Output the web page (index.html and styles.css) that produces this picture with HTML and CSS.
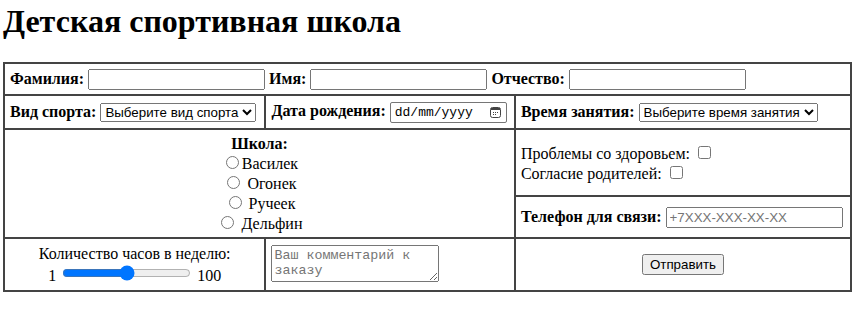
FILE: index.html
```
<!DOCTYPE html>
<html lang="ru">
<head>
    <meta charset="utf-8">
    <title>Детская спортивная школа</title>
    <link rel="stylesheet" href="styles.css">
</head>
<body>
    <h1>Детская спортивная школа</h1>
    <form>
        <table class="anketa">
            <colgroup>
                <col class="c1">
                <col class="c2">
                <col class="c3">
            </colgroup>
            <tr class="r1">
                <td colspan="3"><b>Фамилия:</b> <input type="text" name="fam"> <b>Имя:</b> <input type="text" name="name"> <b>Отчество:</b> <input type="text" name="otch"></td>
            </tr>
            <tr class="r2">
                <td><b>Вид спорта:</b> <select name="sport"><option>Выберите вид спорта</option><option>Футбол</option><option>Плавание</option></select></td>
                <td><b>Дата рождения:</b> <span class="date"><input type="text" name="birth" placeholder="dd/mm/yyyy"><svg width="11" height="11" viewBox="0 0 11 11"><rect x="0.5" y="0.5" width="10" height="10" rx="2" fill="none" stroke="#444"/><rect x="1" y="1" width="9" height="2" fill="#444"/><rect x="3" y="5" width="1" height="1" fill="#444"/><rect x="5" y="5" width="1" height="1" fill="#444"/><rect x="7" y="5" width="1" height="1" fill="#444"/><rect x="3" y="7" width="1" height="1" fill="#444"/><rect x="5" y="7" width="1" height="1" fill="#444"/></svg></span></td>
                <td><b>Время занятия:</b> <select name="time"><option>Выберите время занятия</option><option>Утро</option><option>Вечер</option></select></td>
            </tr>
            <tr class="r3">
                <td colspan="2" rowspan="2" class="center">
                    <b>Школа:</b><br>
                    <label><input type="radio" name="school">Василек</label><br>
                    <label><input type="radio" name="school"> Огонек</label><br>
                    <label><input type="radio" name="school"> Ручеек</label><br>
                    <label><input type="radio" name="school"> Дельфин</label>
                </td>
                <td class="checks">
                    Проблемы со здоровьем: <input type="checkbox" name="health"><br>
                    Согласие родителей: <input type="checkbox" name="agree">
                </td>
            </tr>
            <tr class="r4">
                <td><b>Телефон для связи:</b> <input type="tel" name="phone" placeholder="+7XXX-XXX-XX-XX"></td>
            </tr>
            <tr class="r5">
                <td class="center">Количество часов в неделю:<br>1 <input type="range" name="hours" min="1" max="100"> 100</td>
                <td><textarea name="comment" placeholder="Ваш комментарий к заказу"></textarea></td>
                <td class="center"><button type="submit">Отправить</button></td>
            </tr>
        </table>
    </form>
</body>
</html>
```

FILE: styles.css
```
body { margin: 3px; font-family: "Liberation Serif", "Times New Roman", serif; font-size: 16px; color: #000; background: #fff; }
h1 { margin: 0 0 22px; font-size: 32px; }
input, select, button { font-family: "Liberation Sans", Arial, sans-serif; font-size: 13.33px; }
textarea { font-family: "Liberation Mono", "Courier New", monospace; font-size: 13.33px; }
input[type="text"], input[type="tel"] { box-sizing: border-box; width: 177px; height: 21px; }
.anketa { border-collapse: collapse; width: 849px; border: 2px solid #444; }
.anketa td { border: 2px solid #444; padding: 4px 5px; }
.c1 { width: 262px; }
.c2 { width: 250px; }
.c3 { width: 337px; }
.r1 { height: 32px; }
.r2 { height: 34px; }
.r3 { height: 67px; }
.r4 { height: 42px; }
.r5 { height: 53px; }
.center { text-align: center; }
.checks { padding-top: 8px; }
.date { display: inline-flex; align-items: center; box-sizing: border-box; width: 117px; height: 21px; border: 1px solid #767676; border-radius: 2px; padding: 0 5px 0 4px; vertical-align: middle; }
.date input { border: 0; padding: 0; width: 85px; height: 19px; font-family: "Liberation Mono", "Courier New", monospace; font-size: 13px; outline: none; }
.date input::placeholder { color: #000; }
.date svg { margin-left: auto; }
.anketa textarea { display: block; box-sizing: border-box; width: 168px; height: 37px; margin-bottom: 3px; }
```
